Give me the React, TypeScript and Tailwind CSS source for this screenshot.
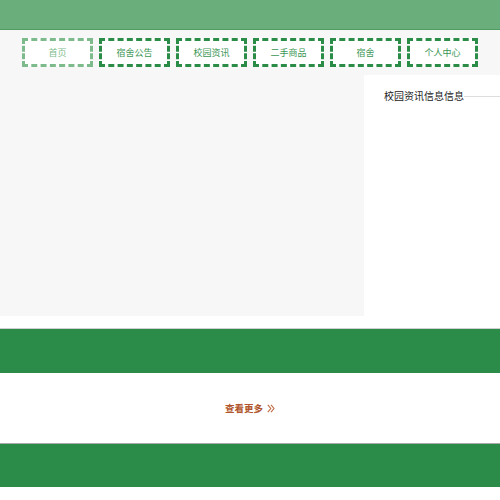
const navItems = ["首页", "宿舍公告", "校园资讯", "二手商品", "宿舍", "个人中心"]

export default function App() {
  return (
    <div className="w-[500px] min-h-[500px] bg-white font-['Noto_Sans_CJK_SC',sans-serif]">
      <div className="h-[29px] bg-[#69ae7b]" />
      <div className="h-[1px] bg-[#4f9d63]" />
      <nav className="flex h-[45px] items-start justify-center gap-[6px] bg-[#f7f7f7] pt-[8px]">
        {navItems.map((item, i) => (
          <div
            key={item}
            className={
              "flex h-[29px] w-[71px] items-center justify-center border-[3px] border-dashed bg-white text-[9px] " +
              (i === 0
                ? "border-[#7dbb8c] text-[#7dbb8c]"
                : "border-[#2b8c48] text-[#3a9654]")
            }
          >
            {item}
          </div>
        ))}
      </nav>
      <div className="flex h-[241px]">
        <div className="w-[364px] bg-[#f7f7f7]" />
        <div className="flex-1 bg-white">
          <div className="mt-[14px] flex items-center pl-[20px]">
            <span className="text-[10px] leading-[14px] text-[#222]">校园资讯信息信息</span>
            <div className="h-[1px] flex-1 bg-[#dddddd]" />
          </div>
        </div>
      </div>
      <div className="h-[12px]" />
      <div className="h-[1px] bg-[#cfcfcf]" />
      <div className="h-[44px] bg-[#2b8c4a]" />
      <div className="flex h-[70px] items-center justify-center gap-[4px]">
        <span className="text-[9.5px] font-bold text-[#b0552c]">查看更多</span>
        <svg width="8" height="9" viewBox="0 0 8 9" fill="none" stroke="#c06a42" strokeWidth="1.1">
          <path d="M0.8 0.8 L3.8 4.5 L0.8 8.2" />
          <path d="M4 0.8 L7 4.5 L4 8.2" />
        </svg>
      </div>
      <div className="h-[1px] bg-[#a9a9a9]" />
      <div className="h-[43px] bg-[#2b8c4a]" />
    </div>
  )
}
